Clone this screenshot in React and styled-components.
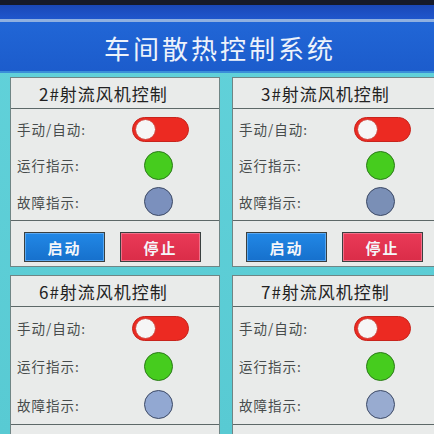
import React from 'react';
import styled, { createGlobalStyle } from 'styled-components';

const GlobalStyle = createGlobalStyle`
  html, body {
    margin: 0;
    padding: 0;
    background: #5ccdd6;
    overflow: hidden;
  }
  * { box-sizing: border-box; }
`;

const Screen = styled.div`
  width: 434px;
  height: 434px;
  overflow: hidden;
  background: linear-gradient(180deg, #62d2da 0%, #58cad3 100%);
  font-family: "Noto Sans CJK SC", "Noto Sans", sans-serif;
`;

const TopEdge = styled.div`
  height: 5px;
  background: #161a2a;
`;

const TopBand = styled.div`
  height: 14px;
  background: linear-gradient(180deg, #1a48b8, #1f56cc);
`;

const TopLine = styled.div`
  height: 3px;
  background: #8fb0e0;
`;

const Header = styled.div`
  height: 51px;
  display: flex;
  align-items: center;
  justify-content: center;
  background: linear-gradient(180deg, #2166d6 0%, #1c5ccc 100%);
  border-bottom: 2px solid #3a8fd8;
`;

const Title = styled.h1`
  margin: 2px 0 0 6px;
  font-size: 26px;
  font-weight: 400;
  letter-spacing: 3px;
  color: #eef3fb;
`;

const Grid = styled.div`
  display: grid;
  grid-template-columns: 210px 210px;
  column-gap: 12px;
  row-gap: 8px;
  padding: 4px 0 0 10px;
`;

const Card = styled.div`
  height: ${p => (p.$tall ? 200 : 190)}px;
  display: flex;
  flex-direction: column;
  background: #e9ebea;
  border: 1px solid #6f8585;
`;

const CardHead = styled.div`
  height: 31px;
  flex: none;
  display: flex;
  align-items: center;
  padding-left: 28px;
  border-bottom: 1px solid #5d6868;
  font-size: 17px;
  letter-spacing: 1px;
  color: #222;
`;

const Rows = styled.div`
  height: ${p => (p.$tall ? 118 : 112)}px;
  flex: none;
  display: flex;
  flex-direction: column;
  justify-content: space-around;
  padding: 2px 0 0;
  border-bottom: 1px solid #5d6868;
`;

const Row = styled.div`
  display: grid;
  grid-template-columns: 115px 57px;
  align-items: center;
  padding-left: 6px;
  height: 30px;
`;

const Label = styled.span`
  font-size: 13.5px;
  color: #474c4c;
  letter-spacing: 1px;
`;

const Toggle = styled.div`
  width: 57px;
  height: 25px;
  border-radius: 13px;
  background: #ec2a22;
  border: 1px solid #c8241c;
  display: flex;
  align-items: center;
  padding-left: 2px;
`;

const Knob = styled.div`
  width: 21px;
  height: 21px;
  border-radius: 50%;
  background: #f6f6f6;
  border: 1px solid #d04038;
`;

const Lamp = styled.div`
  width: 29px;
  height: 29px;
  border-radius: 50%;
  margin-left: 12px;
  background: ${p => p.$color};
  border: 1px solid ${p => p.$edge};
`;

const Buttons = styled.div`
  flex: 1;
  display: flex;
  gap: 15px;
  padding: 11px 0 0 13px;
`;

const Btn = styled.button`
  width: 81px;
  height: 30px;
  border: 1px solid #3a4040;
  box-shadow: inset 0 0 0 1px ${p => p.$hi};
  background: ${p => p.$bg};
  color: #f4f6fa;
  font-family: "Noto Sans CJK SC", sans-serif;
  font-size: 15px;
  font-weight: 700;
  letter-spacing: 2px;
  padding: 0;
`;

const fans = [
  { no: 2, fault: '#7b90bd' },
  { no: 3, fault: '#7a8fb6' },
  { no: 6, fault: '#92a8d2', tall: true },
  { no: 7, fault: '#98abd0', tall: true },
];

function FanCard({ no, fault, tall }) {
  return (
    <Card $tall={tall}>
      <CardHead>{no}#射流风机控制</CardHead>
      <Rows $tall={tall}>
        <Row>
          <Label>手动/自动:</Label>
          <Toggle><Knob /></Toggle>
        </Row>
        <Row>
          <Label>运行指示:</Label>
          <Lamp $color="#46cc1e" $edge="#2c7a1a" />
        </Row>
        <Row>
          <Label>故障指示:</Label>
          <Lamp $color={fault} $edge="#3d4a66" />
        </Row>
      </Rows>
      <Buttons>
        <Btn $bg="linear-gradient(180deg,#2288e6,#1670cc)" $hi="#5aa8f0">启动</Btn>
        <Btn $bg="linear-gradient(180deg,#ea3a58,#da2c48)" $hi="#f07088">停止</Btn>
      </Buttons>
    </Card>
  );
}

export default function App() {
  return (
    <Screen>
      <GlobalStyle />
      <TopEdge />
      <TopBand />
      <TopLine />
      <Header>
        <Title>车间散热控制系统</Title>
      </Header>
      <Grid>
        {fans.map(f => <FanCard key={f.no} {...f} />)}
      </Grid>
    </Screen>
  );
}
